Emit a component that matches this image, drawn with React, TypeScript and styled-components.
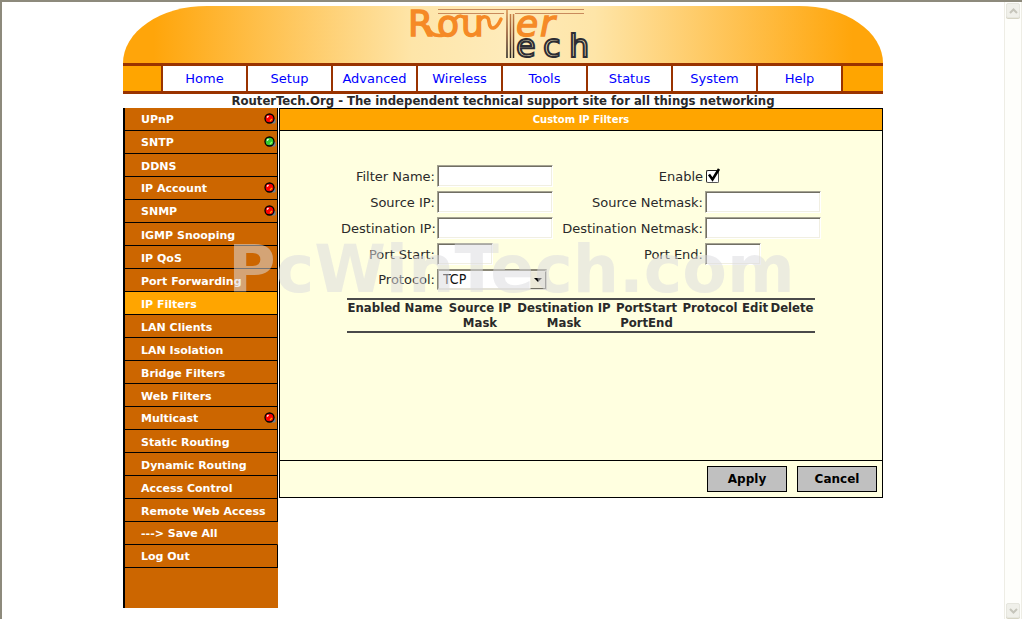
import React from "react";
import styled, { createGlobalStyle } from "styled-components";

const GlobalStyle = createGlobalStyle`
  * { box-sizing: border-box; }
  body {
    margin: 0;
    background: #fff;
    color: #2a2a2a;
    font-family: Verdana, "DejaVu Sans", sans-serif;
    font-size: 13px;
  }
`;

const condensed = `Tahoma, "DejaVu Sans Condensed", "DejaVu Sans", sans-serif`;

const Window = styled.div`
  display: flex;
  min-height: 100vh;
  border-top: 2px solid #8d8a7c;
  border-left: 2px solid #8d8a7c;
`;

const Viewport = styled.main`
  flex: 1;
  padding-top: 4px;
`;

const Page = styled.div`
  position: relative;
  max-width: 760px;
  margin: 0 auto;
`;

const Banner = styled.header`
  height: 57px;
  display: flex;
  justify-content: center;
  border-radius: 84px 84px 0 0 / 57px 57px 0 0;
  background: linear-gradient(to right, #ffa50a 0%, #ffa50a 4%, #fee5a8 38%, #feebba 50%, #fee5a8 62%, #ffa50a 96%, #ffa50a 100%);
`;

const NavBar = styled.nav`
  display: flex;
  justify-content: center;
  padding-right: 2px;
  background: #ffa500;
  border-top: 3px solid #993300;
  border-bottom: 3px solid #993300;
`;

const NavList = styled.ul`
  display: flex;
  flex: 0 1 682px;
  margin: 0;
  padding: 0;
  list-style: none;
  border-left: 2px solid #993300;
`;

const NavItem = styled.li`
  flex: 1;
  border-right: 2px solid #993300;
  background: #fff;
  text-align: center;
`;

const NavLink = styled.a`
  display: block;
  line-height: 25px;
  color: #0000ff;
  text-decoration: none;
`;

const Tagline = styled.p`
  margin: 0;
  line-height: 14px;
  text-align: center;
  white-space: nowrap;
  font-family: ${condensed};
  font-size: 13px;
  font-weight: bold;
`;

const Columns = styled.div`
  display: flex;
  align-items: flex-start;
  gap: 1px;
`;

const Sidebar = styled.nav`
  flex: 0 0 155px;
  min-height: 500px;
  padding-bottom: 40px;
  border-left: 2px solid #000;
  background: #cc6600;
`;

const SideList = styled.ul`
  margin: 0;
  padding: 0;
  list-style: none;
`;

const SideItem = styled.li<{ $active?: boolean; $open?: boolean }>`
  border-bottom: 1px solid #000;
  border-right: 1px solid ${(p) => (p.$open ? "#cc6600" : "#000")};
  background: ${(p) => (p.$active ? "#ffa500" : "#cc6600")};
`;

const SideLink = styled.a<{ $raised?: boolean }>`
  display: flex;
  align-items: center;
  justify-content: space-between;
  height: 22px;
  padding: ${(p) => (p.$raised ? "0 1px 0 16px" : "2px 1px 0 16px")};
  color: #fff;
  font-size: 11px;
  font-weight: bold;
  white-space: nowrap;
  text-decoration: none;
`;

const Panel = styled.form`
  flex: 1;
  min-width: 0;
  border: 1px solid #000;
  background: #ffffe0;
`;

const PanelTitle = styled.h1`
  margin: 0;
  border-bottom: 1px solid #000;
  background: #ffa500;
  color: #fff;
  font-size: 10px;
  line-height: 21px;
  text-align: center;
`;

const PanelBody = styled.div`
  min-height: 329px;
  padding-top: 32px;
`;

const Fields = styled.div`
  display: grid;
  grid-template-columns: 96px 116px 152px 116px;
  grid-template-rows: repeat(4, 26px) 24px;
  align-items: center;
  justify-content: center;
`;

const Label = styled.label`
  padding-right: 2px;
  text-align: right;
  white-space: nowrap;
`;

const TextBox = styled.input<{ $short?: boolean }>`
  width: ${(p) => (p.$short ? 56 : 116)}px;
  height: 22px;
  margin: 0;
  padding: 1px 4px;
  border: 1px solid;
  border-color: #a5a392 #fff #fff #a5a392;
  box-shadow: inset 1px 1px 0 #716f64, inset -1px -1px 0 #f1efe2;
  background: #fff;
  font: inherit;
`;

const CheckCell = styled.span`
  position: relative;
  display: block;
  width: 16px;
  height: 16px;
`;

const CheckBox = styled.input`
  appearance: none;
  width: 13px;
  height: 13px;
  margin: 2px 0 0 1px;
  border: 1px solid #222;
  border-right-color: #555;
  border-bottom-color: #555;
  border-radius: 2px;
  background: #fff;
  & + svg { display: none; }
  &:checked + svg { display: block; }
`;

const CheckMark = styled.svg`
  position: absolute;
  inset: 0;
  pointer-events: none;
`;

const SelectWrap = styled.span`
  position: relative;
  display: block;
  width: 110px;
`;

const Select = styled.select`
  appearance: none;
  display: block;
  width: 100%;
  height: 21px;
  padding: 0 20px 0 4px;
  border: 2px solid;
  border-color: #8b8878 #cfccbd #e4e2d6 #8b8878;
  border-radius: 0;
  background: #fff;
  color: #111;
  font-family: ${condensed};
  font-size: 14px;
`;

const SelectArrow = styled.span`
  position: absolute;
  top: 2px;
  right: 1px;
  display: flex;
  align-items: center;
  justify-content: center;
  width: 16px;
  height: 18px;
  border: 1px solid;
  border-color: #f1efe2 #716f64 #716f64 #f1efe2;
  background: #ece9d8;
  pointer-events: none;
`;

const FilterTable = styled.table`
  width: 468px;
  margin: 7px auto 0;
  table-layout: fixed;
  border-collapse: collapse;
  border-top: 2px solid #4a4a4a;
  border-bottom: 2px solid #4a4a4a;
  font-family: ${condensed};
  font-size: 13px;
  line-height: 15px;

  th {
    padding: 0 0 1px;
    vertical-align: top;
    white-space: nowrap;
  }
`;

const Actions = styled.div`
  display: flex;
  justify-content: flex-end;
  gap: 10px;
  padding: 5px 5px 5px 0;
  border-top: 1px solid #000;
`;

const Button = styled.button`
  width: 80px;
  height: 26px;
  border: 1px solid #000;
  background: #c0c0c0;
  color: #000;
  font-family: inherit;
  font-size: 12px;
  font-weight: bold;
  padding: 0;
`;

const Watermark = styled.div`
  position: absolute;
  top: 226px;
  left: 105px;
  color: rgba(219, 219, 222, 0.53);
  font-size: 65px;
  font-weight: bold;
  line-height: 75px;
  white-space: nowrap;
  pointer-events: none;
`;

const ScrollBar = styled.aside`
  flex: 0 0 18px;
  display: flex;
  flex-direction: column;
  justify-content: space-between;
  align-items: center;
  padding: 1px 0;
  border-left: 1px solid #eeede5;
  border-right: 1px solid #eeede5;
  background: #fefefb;
`;

const ScrollButton = styled.button`
  display: flex;
  align-items: center;
  justify-content: center;
  width: 14px;
  height: 15px;
  padding: 0;
  border: 1px solid #e6e6de;
  border-radius: 2px;
  background: #f0f0ea;
  box-shadow: 0 1px 0 #d6d4c4;
`;

const LogoArt = styled.svg`
  display: block;
  overflow: visible;
`;

function Logo() {
  return (
    <LogoArt width="186" height="57" viewBox="0 0 186 57" role="img" aria-label="RouterTech">
      <defs>
        <linearGradient id="stem" gradientUnits="userSpaceOnUse" x1="0" y1="3" x2="0" y2="52">
          <stop offset="0" stopColor="#d9904f" />
          <stop offset="0.5" stopColor="#8a5030" />
          <stop offset="1" stopColor="#222" />
        </linearGradient>
      </defs>
      <path d="M28 3.500H174M28 7.500H94M105 7.500H174" fill="none" stroke="#c98a5c" strokeWidth="1" />
      <g fill="#f58a26" stroke="#f58a26" strokeWidth="1.400" fontFamily='"DejaVu Sans", sans-serif' fontSize="36">
        <text x="-2" y="30">R</text>
        <text x="27" y="30">o</text>
        <text x="51" y="30">u</text>
        <text x="106" y="30" fontStyle="oblique">e</text>
        <text x="130" y="30" fontStyle="oblique">r</text>
      </g>
      <path
        d="M18 21C20 28 25 31 34 29M45 13C49 9 53 9 56 14M70 14C73 9 79 10 79 16C80 25 86 24 91 13"
        fill="none"
        stroke="#f58a26"
        strokeWidth="3.500"
        strokeLinecap="round"
      />
      <path d="M97 4V52M100.500 8V52M103.500 8V52" fill="none" stroke="url(#stem)" strokeWidth="1.500" />
      <g
        fill="#f4e2b4"
        stroke="#2d2d33"
        strokeWidth="2"
        fontFamily='"DejaVu Sans", sans-serif'
        fontSize="32"
      >
        <text x="106" y="51">e</text>
        <text x="133" y="51">c</text>
        <text x="159" y="51">h</text>
      </g>
    </LogoArt>
  );
}

function Led({ color }: { color: "red" | "green" }) {
  const off = color === "red";
  return (
    <svg width="12" height="12" viewBox="0 0 12 12" role="img" aria-label={off ? "off" : "on"}>
      <path d="M5 10h6V6z" fill="#708090" stroke="#708090" />
      <circle cx="5.500" cy="5.500" r="4.500" fill={off ? "#ff0000" : "#33cc33"} stroke="#000" strokeWidth="1.300" />
      <path d="M3 4.500L4.500 3" stroke="#fff" strokeWidth="1.200" />
      <path d="M6 8L8 6" stroke={off ? "#ffa500" : "#99ff66"} strokeWidth="1.200" />
    </svg>
  );
}

const navItems = ["Home", "Setup", "Advanced", "Wireless", "Tools", "Status", "System", "Help"];

type Side = { text: string; led?: "red" | "green"; active?: boolean; raised?: boolean; open?: boolean };
const sideItems: Side[] = [
  { text: "UPnP", led: "red" },
  { text: "SNTP", led: "green" },
  { text: "DDNS" },
  { text: "IP Account", led: "red" },
  { text: "SNMP", led: "red" },
  { text: "IGMP Snooping" },
  { text: "IP QoS" },
  { text: "Port Forwarding" },
  { text: "IP Filters", active: true },
  { text: "LAN Clients" },
  { text: "LAN Isolation" },
  { text: "Bridge Filters" },
  { text: "Web Filters" },
  { text: "Multicast", led: "red" },
  { text: "Static Routing" },
  { text: "Dynamic Routing" },
  { text: "Access Control" },
  { text: "Remote Web Access" },
  { text: "---> Save All", raised: true, open: true },
  { text: "Log Out", raised: true },
];

const columns: { width: number; lines: string[] }[] = [
  { width: 54, lines: ["Enabled"] },
  { width: 45, lines: ["Name"] },
  { width: 68, lines: ["Source IP", "Mask"] },
  { width: 100, lines: ["Destination IP", "Mask"] },
  { width: 65, lines: ["PortStart", "PortEnd"] },
  { width: 62, lines: ["Protocol"] },
  { width: 28, lines: ["Edit"] },
  { width: 46, lines: ["Delete"] },
];

export default function App() {
  return (
    <>
      <GlobalStyle />
      <Window>
        <Viewport>
          <Page>
            <Banner>
              <Logo />
            </Banner>
            <NavBar>
              <NavList>
                {navItems.map((item) => (
                  <NavItem key={item}>
                    <NavLink href="#">{item}</NavLink>
                  </NavItem>
                ))}
              </NavList>
            </NavBar>
            <Tagline>RouterTech.Org - The independent technical support site for all things networking</Tagline>
            <Columns>
              <Sidebar>
                <SideList>
                  {sideItems.map((s) => (
                    <SideItem key={s.text} $active={s.active} $open={s.open}>
                      <SideLink href="#" $raised={s.raised || !!s.led}>
                        {s.text}
                        {s.led && <Led color={s.led} />}
                      </SideLink>
                    </SideItem>
                  ))}
                </SideList>
              </Sidebar>
              <Panel onSubmit={(e) => e.preventDefault()}>
                <PanelTitle>Custom IP Filters</PanelTitle>
                <PanelBody>
                  <Fields>
                    <Label htmlFor="name">Filter Name:</Label>
                    <TextBox id="name" />
                    <Label htmlFor="enable">Enable</Label>
                    <CheckCell>
                      <CheckBox id="enable" type="checkbox" defaultChecked />
                      <CheckMark width="16" height="16" viewBox="0 0 16 16">
                        <path d="M4 6.500L7.500 11.500L14 1" fill="none" stroke="#000" strokeWidth="2.500" />
                      </CheckMark>
                    </CheckCell>
                    <Label htmlFor="srcip">Source IP:</Label>
                    <TextBox id="srcip" />
                    <Label htmlFor="srcmask">Source Netmask:</Label>
                    <TextBox id="srcmask" />
                    <Label htmlFor="dstip">Destination IP:</Label>
                    <TextBox id="dstip" />
                    <Label htmlFor="dstmask">Destination Netmask:</Label>
                    <TextBox id="dstmask" />
                    <Label htmlFor="pstart">Port Start:</Label>
                    <TextBox id="pstart" $short />
                    <Label htmlFor="pend">Port End:</Label>
                    <TextBox id="pend" $short />
                    <Label htmlFor="proto">Protocol:</Label>
                    <SelectWrap>
                      <Select id="proto" defaultValue="TCP">
                        <option>TCP</option>
                        <option>UDP</option>
                      </Select>
                      <SelectArrow>
                        <svg width="8" height="4" viewBox="0 0 8 4">
                          <path d="M0 0H8L4 4z" fill="#000" />
                        </svg>
                      </SelectArrow>
                    </SelectWrap>
                  </Fields>
                  <FilterTable>
                    <colgroup>
                      {columns.map((c) => (
                        <col key={c.lines[0]} width={c.width} />
                      ))}
                    </colgroup>
                    <thead>
                      <tr>
                        {columns.map((c) => (
                          <th key={c.lines[0]} scope="col">
                            {c.lines[0]}
                            {c.lines[1] && <br />}
                            {c.lines[1]}
                          </th>
                        ))}
                      </tr>
                    </thead>
                  </FilterTable>
                </PanelBody>
                <Actions>
                  <Button type="submit">Apply</Button>
                  <Button type="button">Cancel</Button>
                </Actions>
              </Panel>
            </Columns>
            <Watermark aria-hidden="true">PcWinTech.com</Watermark>
          </Page>
        </Viewport>
        <ScrollBar>
          <ScrollButton type="button" aria-label="Scroll up">
            <svg width="9" height="6" viewBox="0 0 9 6">
              <path d="M1 5L4.500 1.500L8 5" fill="none" stroke="#c6c5bb" strokeWidth="2" />
            </svg>
          </ScrollButton>
          <ScrollButton type="button" aria-label="Scroll down">
            <svg width="9" height="6" viewBox="0 0 9 6">
              <path d="M1 1L4.500 4.500L8 1" fill="none" stroke="#c6c5bb" strokeWidth="2" />
            </svg>
          </ScrollButton>
        </ScrollBar>
      </Window>
    </>
  );
}
